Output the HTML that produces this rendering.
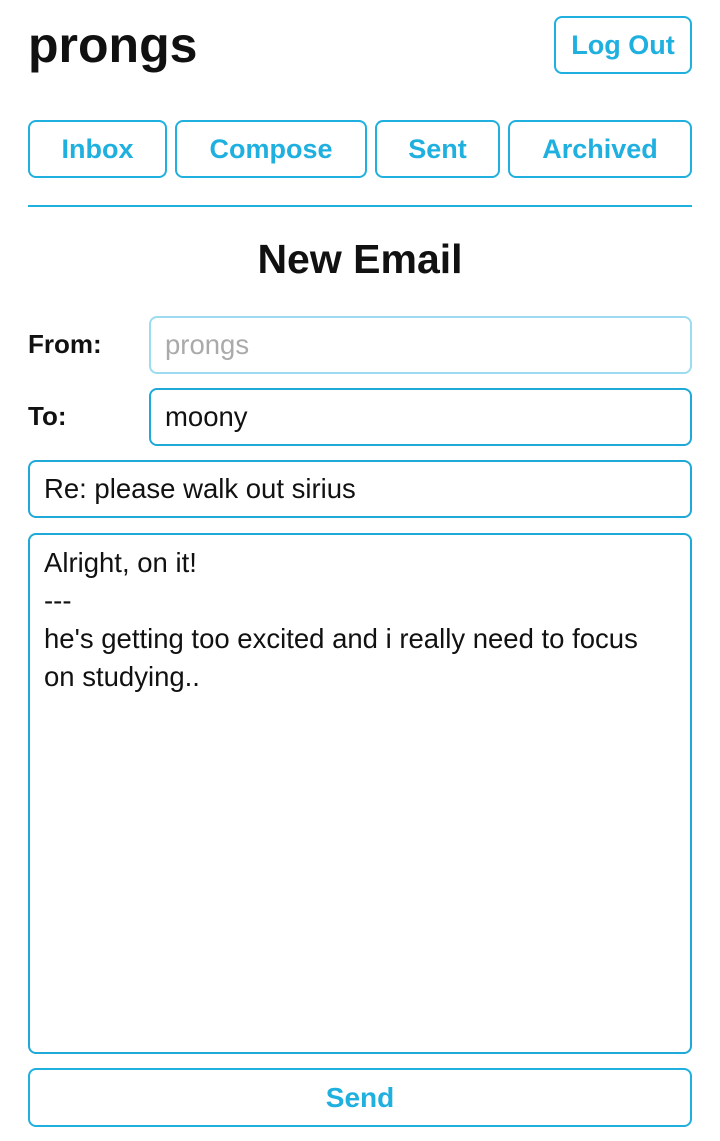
<!DOCTYPE html>
<html><head><style>
body{margin:0;width:720px;height:1141px;background:#fff;font-family:"Liberation Sans",Arial,Helvetica,sans-serif;position:relative;overflow:hidden}
.a{position:absolute;box-sizing:border-box}
.btn{border:2px solid #1fb0e0;border-radius:8px;color:#1fb0e0;font-weight:bold;font-size:27px;display:flex;align-items:center;justify-content:center}
.in{border:2px solid #1ea9d8;border-radius:8px;font-size:27.5px;color:#111;padding-left:14px;display:flex;align-items:center}
.lbl{font-weight:bold;font-size:26px;color:#111}
</style></head><body>
<div class="a" style="left:28px;top:16px;font-size:50px;font-weight:bold;color:#111">prongs</div>
<div class="a btn" style="left:554px;top:16px;width:138px;height:58px">Log Out</div>
<div class="a btn" style="left:28px;top:120px;width:139px;height:58px">Inbox</div>
<div class="a btn" style="left:175px;top:120px;width:192px;height:58px">Compose</div>
<div class="a btn" style="left:375px;top:120px;width:125px;height:58px">Sent</div>
<div class="a btn" style="left:508px;top:120px;width:184px;height:58px">Archived</div>
<div class="a" style="left:28px;top:205px;width:664px;height:2px;background:#1fb0e0"></div>
<div class="a" style="left:0;top:236px;width:720px;text-align:center;font-size:41px;font-weight:bold;color:#111">New Email</div>
<div class="a lbl" style="left:28px;top:329px">From:</div>
<div class="a in" style="left:149px;top:316px;width:543px;height:58px;border-color:#9ddcf0;color:#aaa">prongs</div>
<div class="a lbl" style="left:28px;top:401px">To:</div>
<div class="a in" style="left:149px;top:388px;width:543px;height:58px">moony</div>
<div class="a in" style="left:28px;top:460px;width:664px;height:58px">Re: please walk out sirius</div>
<div class="a in" style="left:28px;top:533px;width:664px;height:521px;padding-top:9px;line-height:38px;display:block">Alright, on it!<br>---<br>he's getting too excited and i really need to focus<br>on studying..</div>
<div class="a btn" style="left:28px;top:1068px;width:664px;height:59px;font-size:28px">Send</div>
</body></html>
